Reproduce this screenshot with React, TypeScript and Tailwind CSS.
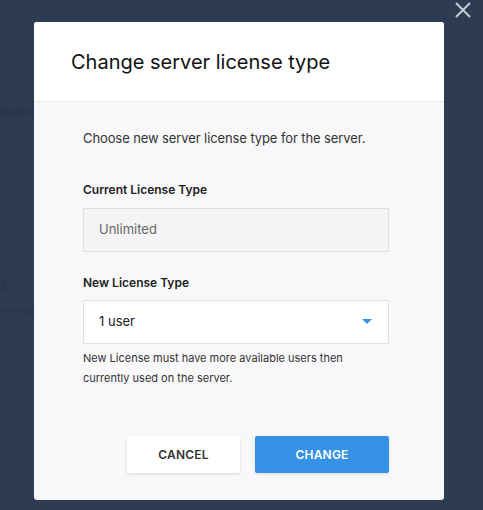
import React from "react"

// Modal for changing a server's license type
export default function App() {
  return (
    <div
      className="relative w-[483px] h-[510px] overflow-hidden bg-[#2d3b53]"
      style={{ fontFamily: "Inter, 'Noto Sans', sans-serif" }}
    >
      {/* faint page content behind overlay */}
      <div className="absolute left-0 top-[103px] text-[12px] font-semibold text-[#26324a] blur-[1px]">Username</div>
      <div className="absolute left-0 top-[275px] text-[12px] text-[#26324a] blur-[1px]">y</div>
      <div className="absolute left-0 top-[304px] text-[11px] text-[#2a364d] blur-[1px]">Python</div>

      <button className="absolute right-[11px] top-[1px] text-[#c5cad3]">
        <svg width="18" height="18" viewBox="0 0 18 18" fill="none" stroke="currentColor" strokeWidth="2">
          <path d="M2 2 L16 16 M16 2 L2 16" />
        </svg>
      </button>

      <div className="absolute left-[34px] top-[22px] w-[410px] h-[478px] rounded-[3px] overflow-hidden bg-[#f8f8fa] flex flex-col">
        <div className="h-[80px] bg-white border-b border-[#e8e9ec] flex items-center pl-[37px]">
          <h1 className="text-[20px] text-[#111] font-normal">Change server license type</h1>
        </div>

        <div className="flex flex-col pl-[49px] pr-[55px] pt-[26px]">
          <p className="text-[13px] leading-[20px] text-[#333] tracking-[-0.1px]">Choose new server license type for the server.</p>

          <label className="mt-[34px] text-[12px] leading-[16px] font-semibold text-[#222]">Current License Type</label>
          <div className="mt-[10px] h-[44px] border border-[#dfe0e3] bg-[#f4f4f6] flex items-center px-[15px] text-[13px] text-[#666]">
            Unlimited
          </div>

          <label className="mt-[23px] text-[12px] leading-[16px] font-semibold text-[#222]">New License Type</label>
          <div className="mt-[9px] h-[44px] border border-[#dfe0e3] bg-white flex items-center justify-between pl-[15px] pr-[16px] text-[13px] text-[#222]">
            <span>1 user</span>
            <svg width="10" height="6" viewBox="0 0 10 6">
              <path d="M0 0 L10 0 L5 5 Z" fill="#3592e6" />
            </svg>
          </div>
          <p className="mt-[4px] text-[11px] leading-[20px] text-[#333]">
            New License must have more available users then
            <br />
            currently used on the server.
          </p>

          <div className="mt-[48px] flex justify-end gap-[15px]">
            <button className="w-[113px] h-[37px] rounded-[2px] bg-white shadow-[0_1px_3px_rgba(0,0,0,0.12)] text-[12px] font-semibold text-[#333] tracking-[0.2px]">
              CANCEL
            </button>
            <button className="w-[134px] h-[37px] rounded-[2px] bg-[#3592e6] shadow-[0_1px_3px_rgba(0,0,0,0.12)] text-[12px] font-semibold text-white tracking-[0.2px]">
              CHANGE
            </button>
          </div>
        </div>
      </div>
    </div>
  )
}
